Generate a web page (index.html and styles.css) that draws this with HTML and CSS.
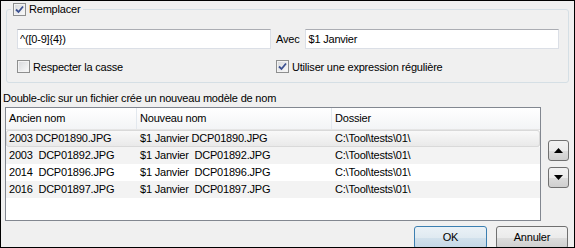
FILE: index.html
```html
<!DOCTYPE html>
<html lang="fr">
<head>
    <meta charset="UTF-8">
    <title>Remplacer</title>
    <link rel="stylesheet" href="styles.css">
</head>
<body>
    <div class="window">
        <fieldset class="group">
            <legend class="group-title">
                <label class="check-label">
                    <span class="check"><svg width="11" height="11" viewBox="0 0 11 11"><path d="M2 5.5 L4.5 8 L9 2.5" /></svg></span>Remplacer
                </label>
            </legend>
            <div class="group-body">
                <input class="textbox" type="text" value="^([0-9]{4})">
                <div class="with">
                    <span class="with-label">Avec</span>
                    <input class="textbox" type="text" value="$1 Janvier">
                </div>
                <label class="check-label">
                    <span class="check unchecked"></span>Respecter la casse
                </label>
                <label class="check-label">
                    <span class="check"><svg width="11" height="11" viewBox="0 0 11 11"><path d="M2 5.5 L4.5 8 L9 2.5" /></svg></span>Utiliser une expression régulière
                </label>
            </div>
        </fieldset>

        <p class="hint">Double-clic sur un fichier crée un nouveau modèle de nom</p>

        <div class="files">
            <div class="listview">
                <div class="lv-head">
                    <span class="lv-col">Ancien nom</span>
                    <span class="lv-col">Nouveau nom</span>
                    <span class="lv-col">Dossier</span>
                </div>
                <div class="lv-row selected">
                    <span class="lv-cell">2003 DCP01890.JPG</span>
                    <span class="lv-cell">$1 Janvier DCP01890.JPG</span>
                    <span class="lv-cell">C:\Tool\tests\01\</span>
                </div>
                <div class="lv-row alt">
                    <span class="lv-cell">2003  DCP01892.JPG</span>
                    <span class="lv-cell">$1 Janvier  DCP01892.JPG</span>
                    <span class="lv-cell">C:\Tool\tests\01\</span>
                </div>
                <div class="lv-row">
                    <span class="lv-cell">2014  DCP01896.JPG</span>
                    <span class="lv-cell">$1 Janvier  DCP01896.JPG</span>
                    <span class="lv-cell">C:\Tool\tests\01\</span>
                </div>
                <div class="lv-row alt">
                    <span class="lv-cell">2016  DCP01897.JPG</span>
                    <span class="lv-cell">$1 Janvier  DCP01897.JPG</span>
                    <span class="lv-cell">C:\Tool\tests\01\</span>
                </div>
            </div>
            <div class="order-buttons">
                <button class="arrow-btn"><svg width="9" height="5" viewBox="0 0 9 5"><path d="M0 5 L4.5 0 L9 5 Z" /></svg></button>
                <button class="arrow-btn"><svg width="9" height="5" viewBox="0 0 9 5"><path d="M0 0 L9 0 L4.5 5 Z" /></svg></button>
            </div>
        </div>

        <div class="actions">
            <button class="btn btn-default">OK</button>
            <button class="btn btn-cancel">Annuler</button>
        </div>
    </div>
</body>
</html>
```

FILE: styles.css
```css
body {
    margin: 0;
    font-family: 'Liberation Sans', Arial, sans-serif;
    font-size: 11px;
    letter-spacing: -0.2px;
    color: #000;
    background: #fff;
}

.window {
    width: 575px;
    height: 248px;
    box-sizing: border-box;
    border: 1px solid #000;
    background-color: #f0f0f0;
    overflow: hidden;
}

/* group box */
.group {
    margin: 1px 5px 0;
    padding: 11px 9px 8px 10px;
    border: 1px solid #d5dfe5;
    border-radius: 3px;
    min-width: 0;
}

.group-title {
    margin-left: -6px;
    padding: 0 3px 0 2px;
    line-height: 14px;
}

.group-body {
    display: grid;
    grid-template-columns: 254px 1fr;
    column-gap: 5px;
    row-gap: 11px;
}

.textbox {
    box-sizing: border-box;
    height: 20px;
    margin: 0;
    padding: 0 2px;
    font: inherit;
    letter-spacing: inherit;
    color: #000;
    background: #fff;
    border: 1px solid #dbdfe6;
    border-top-color: #abadb3;
    outline: none;
}

.with {
    display: flex;
    align-items: center;
    gap: 6px;
}

.with .textbox {
    flex: 1;
    min-width: 0;
}

.check-label {
    display: inline-flex;
    align-items: center;
    gap: 3px;
    line-height: 14px;
}

.check {
    width: 13px;
    height: 13px;
    box-sizing: border-box;
    border: 1px solid #8e8f8f;
    background: linear-gradient(135deg, #d6d8db, #fbfbfb);
    box-shadow: inset 0 0 0 1px #f3f3f3;
    display: flex;
    align-items: center;
    justify-content: center;
}

.check svg path {
    fill: none;
    stroke: #3c5191;
    stroke-width: 1.8;
}

/* list */
.hint {
    margin: 8px 0 2px 2px;
    line-height: 14px;
}

.files {
    display: flex;
    align-items: center;
}

.listview {
    margin-left: 4px;
    width: 536px;
    height: 114px;
    box-sizing: border-box;
    border: 1px solid #828790;
    background: #fff;
}

.lv-head,
.lv-row {
    display: grid;
    grid-template-columns: 131px 195px 1fr;
}

.lv-head {
    height: 22px;
    box-sizing: border-box;
    border-bottom: 1px solid #e5e5e5;
    background: linear-gradient(#ffffff, #f3f4f6);
}

.lv-col {
    padding-left: 3px;
    line-height: 21px;
    border-right: 1px solid #e3e8ee;
}

.lv-col:last-child {
    border-right: none;
}

.lv-row {
    height: 17px;
    line-height: 17px;
    white-space: pre;
}

.lv-cell {
    padding-left: 3px;
    overflow: hidden;
}

.lv-row.alt {
    background: #f3f3f3;
}

.lv-row.selected {
    background: linear-gradient(#fafafa, #e8e8e8);
    box-shadow: inset 0 0 0 1px #d9d9d9;
    border-radius: 3px;
}

.order-buttons {
    margin-left: 7px;
    display: flex;
    flex-direction: column;
    gap: 6px;
}

.arrow-btn {
    width: 21px;
    height: 21px;
    padding: 0;
    border: 1px solid #707070;
    border-radius: 3px;
    background: linear-gradient(#f2f2f2 0%, #ebebeb 50%, #dddddd 51%, #cfcfcf 100%);
    display: flex;
    align-items: center;
    justify-content: center;
}

.arrow-btn svg path {
    fill: #000;
}

/* dialog buttons */
.actions {
    display: flex;
    justify-content: flex-end;
    gap: 9px;
    margin-top: 5px;
    padding-right: 6px;
}

.btn {
    height: 23px;
    padding: 0;
    font: inherit;
    letter-spacing: inherit;
    color: #000;
    border: 1px solid #707070;
    border-radius: 3px;
    background: linear-gradient(#f2f2f2 0%, #ebebeb 50%, #dddddd 51%, #cfcfcf 100%);
}

.btn-default {
    width: 73px;
    border-color: #3c7fb1;
    background: linear-gradient(#eaf1f6 0%, #e0eaf1 50%, #d2e1ec 51%, #c4d7e6 100%);
}

.btn-cancel {
    width: 72px;
}
```
